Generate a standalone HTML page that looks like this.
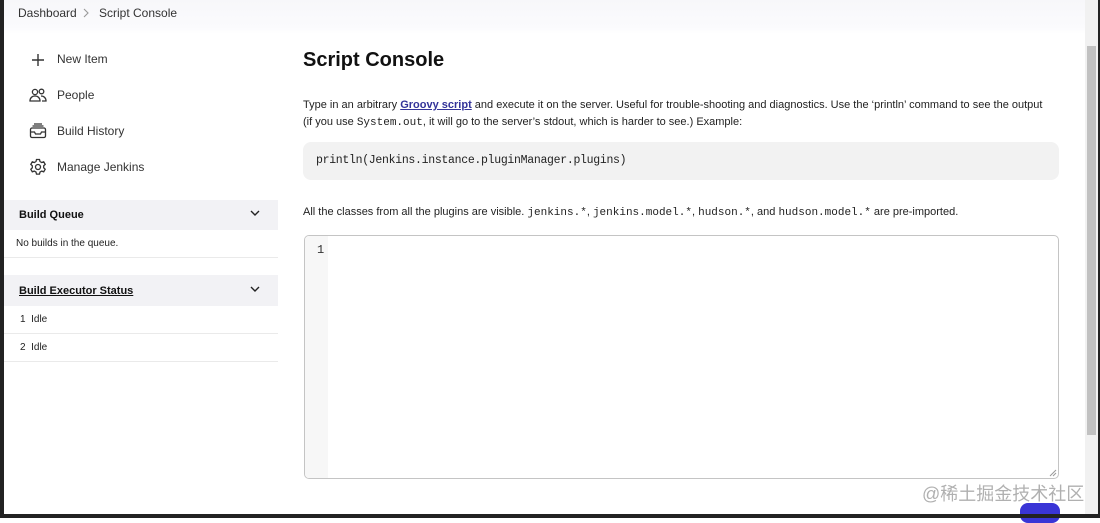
<!DOCTYPE html>
<html><head><style>
*{box-sizing:border-box;margin:0;padding:0}
body{width:1100px;height:518px;overflow:hidden;background:#fff;font-family:"Liberation Sans",sans-serif;color:#222;position:relative}
.a{position:absolute;white-space:nowrap}
.mono{font-family:"Liberation Mono",monospace}
.side{font-size:12px;color:#333}
svg{position:absolute}
</style></head><body>
<div class="a" style="left:0;top:0;width:1085px;height:34px;background:linear-gradient(#f7f7fa,#fbfbfd 80%,#fff)"></div>
<div class="a" style="left:18px;top:6px;font-size:12px;color:#333">Dashboard</div>
<svg style="left:82px;top:8px" width="8" height="10" viewBox="0 0 8 10"><path d="M2 1l4 4-4 4" stroke="#999" stroke-width="1.1" fill="none"/></svg>
<div class="a" style="left:99px;top:6px;font-size:12px;color:#333">Script Console</div>

<svg style="left:30px;top:52px" width="16" height="16" viewBox="0 0 16 16"><path d="M8 2v12M2 8h12" stroke="#333" stroke-width="1.4" fill="none"/></svg>
<div class="a side" style="left:57px;top:52px">New Item</div>
<svg style="left:29px;top:87px" width="18" height="16" viewBox="0 0 18 16" fill="none" stroke="#333" stroke-width="1.3"><circle cx="6" cy="5" r="2.6"/><circle cx="12.5" cy="4.5" r="2.3"/><path d="M1 14c0-3 2-5 5-5s5 2 5 5zM12 9c3 0 5 2 5 5h-4"/></svg>
<div class="a side" style="left:57px;top:88px">People</div>
<svg style="left:29px;top:123px" width="18" height="16" viewBox="0 0 18 16" fill="none" stroke="#333" stroke-width="1.3"><rect x="1.5" y="5" width="15" height="9.5" rx="1.5"/><path d="M1.5 9h4l1 2h5l1-2h4M3.5 3h11M5 1h8"/></svg>
<div class="a side" style="left:57px;top:124px">Build History</div>
<svg style="left:29px;top:158px" width="18" height="18" viewBox="0 0 18 18" fill="none" stroke="#333" stroke-width="1.3"><path d="M7.5 1.5h3l.5 2 1.7 1 2-.7 1.5 2.6-1.5 1.4v2l1.5 1.4-1.5 2.6-2-.7-1.7 1-.5 2h-3l-.5-2-1.7-1-2 .7-1.5-2.6 1.5-1.4v-2L1.8 6.4l1.5-2.6 2 .7 1.7-1z"/><circle cx="9" cy="9" r="2.5"/></svg>
<div class="a side" style="left:57px;top:160px">Manage Jenkins</div>

<div class="a" style="left:4px;top:200px;width:274px;height:30px;background:#f2f2f5"></div>
<div class="a" style="left:19px;top:209px;font-size:11px;font-weight:bold;color:#111">Build Queue</div>
<svg style="left:249px;top:208px" width="12" height="10" viewBox="0 0 12 10"><path d="M2 3l4 4 4-4" stroke="#222" stroke-width="1.4" fill="none"/></svg>
<div class="a" style="left:16px;top:238px;font-size:10px;color:#222">No builds in the queue.</div>
<div class="a" style="left:4px;top:257px;width:274px;height:1px;background:#eaeaea"></div>

<div class="a" style="left:4px;top:275px;width:274px;height:31px;background:#f2f2f5"></div>
<div class="a" style="left:19px;top:285px;font-size:11px;font-weight:bold;color:#111;text-decoration:underline">Build Executor Status</div>
<svg style="left:249px;top:284px" width="12" height="10" viewBox="0 0 12 10"><path d="M2 3l4 4 4-4" stroke="#222" stroke-width="1.4" fill="none"/></svg>
<div class="a" style="left:20px;top:314px;font-size:10px;color:#222">1&nbsp; Idle</div>
<div class="a" style="left:4px;top:333px;width:274px;height:1px;background:#eaeaea"></div>
<div class="a" style="left:20px;top:342px;font-size:10px;color:#222">2&nbsp; Idle</div>
<div class="a" style="left:4px;top:361px;width:274px;height:1px;background:#eaeaea"></div>

<div class="a" style="left:303px;top:49px;font-size:20px;font-weight:bold;color:#111">Script Console</div>
<div class="a" style="left:303px;top:97px;font-size:11px;line-height:17px;color:#222">Type in an arbitrary <b style="color:#333399;text-decoration:underline">Groovy script</b> and execute it on the server. Useful for trouble-shooting and diagnostics. Use the ‘println’ command to see the output<br>(if you use <span class="mono">System.out</span>, it will go to the server’s stdout, which is harder to see.) Example:</div>
<div class="a" style="left:303px;top:142px;width:756px;height:38px;background:#f2f2f2;border-radius:8px"></div>
<div class="a mono" style="left:316px;top:154px;font-size:11.5px;color:#222;letter-spacing:-0.3px">println(Jenkins.instance.pluginManager.plugins)</div>
<div class="a" style="left:303px;top:206px;font-size:11px;color:#222">All the classes from all the plugins are visible. <span class="mono">jenkins.*</span>, <span class="mono">jenkins.model.*</span>, <span class="mono">hudson.*</span>, and <span class="mono">hudson.model.*</span> are pre-imported.</div>
<div class="a" style="left:304px;top:235px;width:755px;height:244px;border:1px solid #c4c4c4;border-radius:5px;overflow:hidden"><div style="position:absolute;left:0;top:0;width:23px;height:100%;background:#f7f7f7"></div></div>
<div class="a mono" style="left:317px;top:243px;font-size:12px;color:#333">1</div>
<svg style="left:1049px;top:469px" width="8" height="8"><path d="M1 7L7 1M4 7L7 4" stroke="#999" stroke-width="1"/></svg>
<div class="a" style="left:1020px;top:503px;width:40px;height:20px;background:#3a35d6;border-radius:8px"></div>
<div class="a" style="left:922px;top:480px;font-size:18px;color:#b0b0b0;font-family:'Liberation Sans','Noto Sans CJK SC',sans-serif">@稀土掘金技术社区</div>

<div class="a" style="left:1085px;top:0;width:13px;height:518px;background:#f1f1f1"></div>
<div class="a" style="left:1087px;top:46px;width:9px;height:389px;background:#c1c1c1"></div>
<div class="a" style="left:0;top:0;width:4px;height:518px;background:#222"></div>
<div class="a" style="left:1098px;top:0;width:2px;height:518px;background:#222"></div>
<div class="a" style="left:0;top:514px;width:1100px;height:4px;background:#222"></div>
</body></html>
